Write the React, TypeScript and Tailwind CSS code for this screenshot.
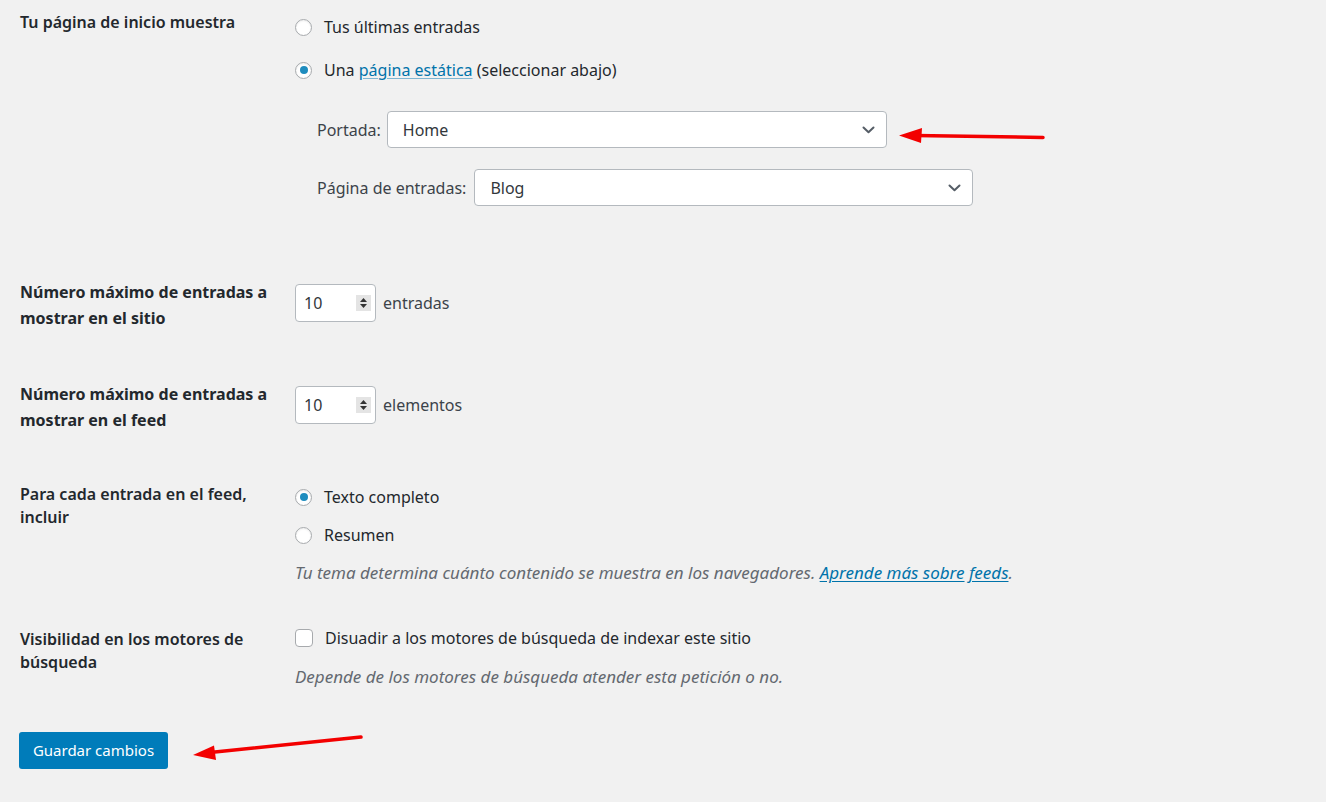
import React from "react";

const font = { fontFamily: '"Noto Sans", "Open Sans", Arial, sans-serif' };

function Radio({ checked }: { checked?: boolean }) {
  return (
    <span className="flex h-[17px] w-[17px] shrink-0 items-center justify-center rounded-full border border-[#a7aaad] bg-white shadow-[inset_0_1px_2px_rgba(0,0,0,0.08)]">
      {checked && <span className="h-[8px] w-[8px] rounded-full bg-[#1e8cbe]" />}
    </span>
  );
}

function Chevron() {
  return (
    <svg width="13" height="8" viewBox="0 0 13 8" fill="none">
      <path d="M1.5 1.5 L6.5 6.2 L11.5 1.5" stroke="#555d66" strokeWidth="2" strokeLinecap="round" strokeLinejoin="round" />
    </svg>
  );
}

function Select({ value, width }: { value: string; width: string }) {
  return (
    <div className={`flex h-[37px] items-center justify-between rounded-[4px] border border-[#b4b9be] bg-white pl-[15px] pr-[11px] text-[16px] text-[#32373c] ${width}`}>
      <span>{value}</span>
      <Chevron />
    </div>
  );
}

function NumberBox({ value }: { value: string }) {
  return (
    <div className="flex h-[38px] w-[81px] items-center justify-between rounded-[4px] border border-[#b4b9be] bg-white pl-[8px] pr-[4px] text-[16px] text-[#32373c]">
      <span>{value}</span>
      <span className="flex h-[16px] w-[15px] flex-col items-center justify-center gap-[2px] bg-[#e4e4e4]">
        <svg width="7" height="4" viewBox="0 0 7 4"><path d="M0 4 L3.5 0 L7 4 Z" fill="#333" /></svg>
        <svg width="7" height="4" viewBox="0 0 7 4"><path d="M0 0 L3.5 4 L7 0 Z" fill="#333" /></svg>
      </span>
    </div>
  );
}

export default function App() {
  return (
    <div className="relative h-[802px] w-full overflow-hidden bg-[#f1f1f1] text-[#23282d]" style={font}>
      {/* Página de inicio */}
      <div className="flex items-start pt-[10px]">
        <div className="w-[295px] shrink-0 pl-[20px] text-[16px] font-semibold leading-[24px]">Tu página de inicio muestra</div>
        <div className="flex flex-col">
          <div className="flex h-[34px] items-center gap-[12px] text-[16px]">
            <Radio />
            <span>Tus últimas entradas</span>
          </div>
          <div className="mt-[9px] flex h-[34px] items-center gap-[12px] text-[16px]">
            <Radio checked />
            <span>
              Una <a className="text-[#0073aa] underline decoration-[#7fb6d2] underline-offset-2">página estática</a> (seleccionar abajo)
            </span>
          </div>
          <div className="mt-[24px] flex items-center gap-[6px] pl-[22px] text-[16px] text-[#3c434a]">
            <span>Portada:</span>
            <Select value="Home" width="w-[500px]" />
          </div>
          <div className="mt-[21px] flex items-center gap-[8px] pl-[22px] text-[16px] text-[#3c434a]">
            <span>Página de entradas:</span>
            <Select value="Blog" width="w-[499px]" />
          </div>
        </div>
      </div>

      {/* Entradas en el sitio */}
      <div className="mt-[73px] flex items-start">
        <div className="w-[295px] shrink-0 pl-[20px] text-[16px] font-bold leading-[26px]">
          Número máximo de entradas a<br />mostrar en el sitio
        </div>
        <div className="mt-[5px] flex items-center gap-[7px] text-[16px] text-[#3c434a]">
          <NumberBox value="10" />
          <span>entradas</span>
        </div>
      </div>

      {/* Entradas en el feed */}
      <div className="mt-[50px] flex items-start">
        <div className="w-[295px] shrink-0 pl-[20px] text-[16px] font-bold leading-[26px]">
          Número máximo de entradas a<br />mostrar en el feed
        </div>
        <div className="mt-[5px] flex items-center gap-[7px] text-[16px] text-[#3c434a]">
          <NumberBox value="10" />
          <span>elementos</span>
        </div>
      </div>

      {/* Contenido del feed */}
      <div className="mt-[47px] flex items-start">
        <div className="w-[295px] shrink-0 pl-[20px] pt-[3px] text-[16px] font-semibold leading-[23px]">
          Para cada entrada en el feed,<br />incluir
        </div>
        <div className="flex flex-col text-[16px]">
          <div className="flex h-[34px] items-center gap-[12px]">
            <Radio checked />
            <span>Texto completo</span>
          </div>
          <div className="mt-[4px] flex h-[34px] items-center gap-[12px]">
            <Radio />
            <span>Resumen</span>
          </div>
          <p className="mt-[9px] text-[17px] italic leading-[24px] text-[#646970]">
            Tu tema determina cuánto contenido se muestra en los navegadores.{" "}
            <a className="text-[#0073aa] underline underline-offset-2">Aprende más sobre</a>{" "}
            <a className="text-[#0073aa] underline underline-offset-2">feeds</a>.
          </p>
        </div>
      </div>

      {/* Visibilidad */}
      <div className="mt-[41px] flex items-start">
        <div className="w-[295px] shrink-0 pl-[20px] pt-[2px] text-[16px] font-semibold leading-[23px]">
          Visibilidad en los motores de<br />búsqueda
        </div>
        <div className="flex flex-col text-[16px]">
          <div className="flex h-[24px] items-center gap-[12px]">
            <span className="h-[18px] w-[18px] rounded-[4px] border border-[#a7aaad] bg-white" />
            <span>Disuadir a los motores de búsqueda de indexar este sitio</span>
          </div>
          <p className="mt-[15px] text-[17px] italic leading-[24px] text-[#646970]">
            Depende de los motores de búsqueda atender esta petición o no.
          </p>
        </div>
      </div>

      <div className="mt-[43px] pl-[19px]">
        <button className="h-[37px] w-[149px] rounded-[3px] bg-[#007cba] text-[15px] text-white">Guardar cambios</button>
      </div>

      {/* Flechas */}
      <svg className="pointer-events-none absolute left-0 top-0" width="1326" height="802">
        <line x1="1043" y1="137.5" x2="915" y2="135.5" stroke="#f30000" strokeWidth="3.5" strokeLinecap="round" />
        <polygon points="899,135.5 922,128 921,143" fill="#f30000" />
        <line x1="361" y1="737" x2="210" y2="752.5" stroke="#f30000" strokeWidth="3.5" strokeLinecap="round" />
        <polygon points="193,755 214,745.5 216,760" fill="#f30000" />
      </svg>
    </div>
  );
}
